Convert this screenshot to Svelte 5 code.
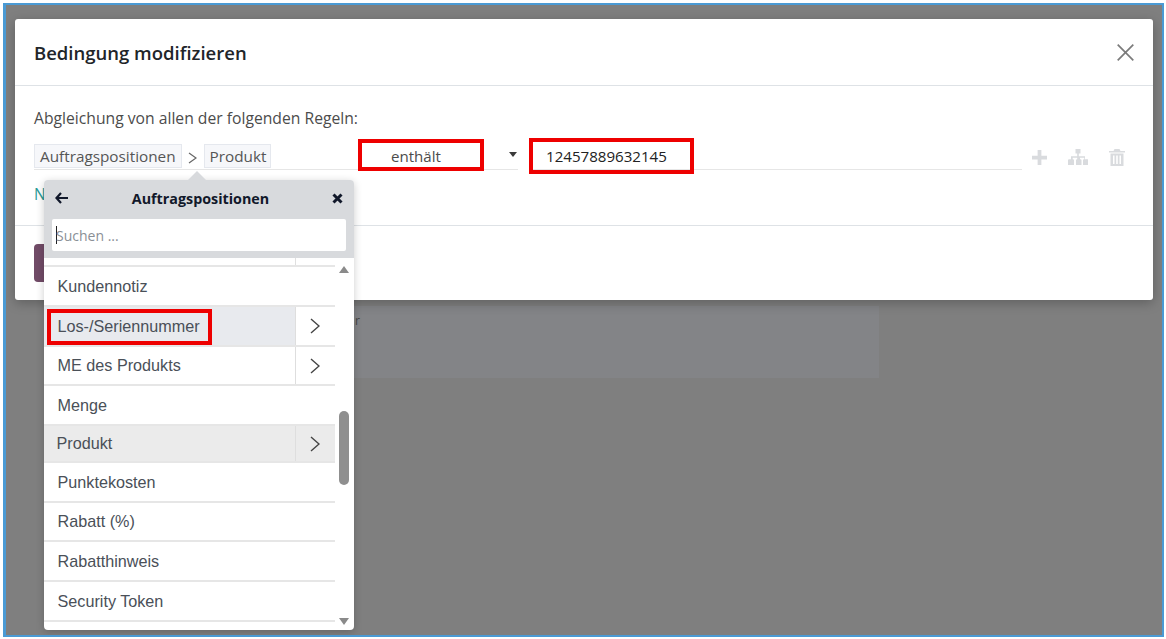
<script>
  const rows = [
    { label: 'Kundennotiz', h: 40 },
    { label: 'Los-/Seriennummer', h: 40, sub: true, tone: 'lot' },
    { label: 'ME des Produkts', h: 39, sub: true },
    { label: 'Menge', h: 40 },
    { label: 'Produkt', h: 37, sub: true, tone: 'active' },
    { label: 'Punktekosten', h: 40 },
    { label: 'Rabatt (%)', h: 39 },
    { label: 'Rabatthinweis', h: 40 },
    { label: 'Security Token', h: 40 }
  ];
</script>

<div class="frame">
  <div class="backdrop">
    <div class="ghost">r</div>
    <section class="modal">
      <header class="head">
        <h1>Bedingung modifizieren</h1>
        <svg class="close" width="17" height="17" viewBox="0 0 17 17"><path d="M.7.7 16.300 16.300M16.300.7.7 16.300" stroke="#7b7b7b" stroke-width="1.700" fill="none"/></svg>
      </header>
      <div class="body">
        <p class="rule">Abgleichung von allen der folgenden Regeln:</p>
        <div class="cond">
          <div class="path">
            <span class="chip">Auftragspositionen</span>
            <svg width="9" height="12" viewBox="0 0 9 12"><path d="M1 1 8 6 1 11" stroke="#666" stroke-width="1.200" fill="none"/></svg>
            <span class="chip second">Produkt</span>
          </div>
          <div class="op">
            <span class="optext">enthält</span>
            <span class="caret"></span>
          </div>
          <div class="val"><span class="valtext">12457889632145</span></div>
          <div class="tools">
            <svg width="15" height="15" viewBox="0 0 16 16"><path d="M6 0h4v6h6v4h-6v6H6v-6H0V6h6z" fill="#d9dbde"/></svg>
            <svg width="20" height="16" viewBox="0 0 20 16"><path d="M7.500 0h5v4.500h-1.700v2.700H17v3h1.500a1 1 0 0 1 1.500 1V16h-5v-4.800a1 1 0 0 1 1-1h.3V8.700h-4.300v1.500h.5a1 1 0 0 1 1 1V16H8v-4.800a1 1 0 0 1 1-1h.2V8.700H4.700v1.500H5a1 1 0 0 1 1 1V16H0v-4.800a1 1 0 0 1 1-1h2V7.200h6.200V4.500H7.500z" fill="#d9dbde"/></svg>
            <svg width="16" height="17" viewBox="0 0 16 17"><path d="M5.500 0h5l1 2H16v1.500H0V2h4.500zM1.500 4.500h13V17h-13zM4 6.500V15h1.500V6.500zM7.200 6.500V15h1.600V6.500zM10.500 6.500V15H12V6.500z" fill="#d9dbde" fill-rule="evenodd"/></svg>
          </div>
        </div>
        <div class="newrule">Neue Regel</div>
      </div>
      <footer class="foot"><span class="btn"></span></footer>
    </section>

    <div class="pop">
      <span class="tip"></span>
      <div class="pophead">
        <div class="poptitle">
          <svg width="14" height="12" viewBox="0 0 14 12"><path d="M6 1 1.500 6 6 11M2 6h11" stroke="#11182a" stroke-width="2.200" fill="none"/></svg>
          <strong>Auftragspositionen</strong>
          <svg width="11" height="11" viewBox="0 0 11 11"><path d="M1.500 1.500 9.500 9.500M9.500 1.500 1.500 9.500" stroke="#11182a" stroke-width="3" fill="none"/></svg>
        </div>
        <div class="search"><span class="cursor"></span><span>Suchen ...</span></div>
      </div>
      <div class="listwrap">
        <div class="stub"></div>
        <ul>
          {#each rows as r}
            <li class={r.tone ?? ''} style="height:{r.h}px">
              <span class="label">{r.label}</span>
              {#if r.sub}
                <span class="sub"><svg width="10" height="16" viewBox="0 0 10 16"><path d="M1 1 9 8 1 15" stroke="#444" stroke-width="1.400" fill="none"/></svg></span>
              {/if}
            </li>
          {/each}
        </ul>
        <div class="scroll">
          <span class="up"></span>
          <span class="thumb"></span>
          <span class="down"></span>
        </div>
      </div>
    </div>

    <span class="mark m-op"></span>
    <span class="mark m-val"></span>
    <span class="mark m-lot"></span>
  </div>
</div>

<style>
  :global(body) { margin: 0; background: #fff; }
  .frame {
    width: 1166px;
    height: 639px;
    box-sizing: border-box;
    padding: 3px 2px 2px 3px;
    font-family: "Open Sans", "Liberation Sans", sans-serif;
  }
  .backdrop {
    position: relative;
    height: 100%;
    box-sizing: border-box;
    padding: 14px 9px 0 9px;
    background: #7f7f7f;
    border: 2px solid #4a9ad4;
    border-left-width: 3px;
    overflow: hidden;
  }
  .ghost {
    position: absolute;
    left: 344px;
    top: 301px;
    width: 529px;
    height: 72px;
    padding: 7px 0 0 5px;
    box-sizing: border-box;
    background: #838487;
    color: #444;
    font-size: 12px;
    line-height: 16px;
  }
  .modal {
    position: relative;
    background: #fff;
    border-radius: 3px;
    height: 281px;
    display: flex;
    flex-direction: column;
    box-shadow: 0 3px 12px rgba(0,0,0,.25);
  }
  .head {
    height: 67px;
    box-sizing: border-box;
    border-bottom: 1px solid #dee2e6;
    display: flex;
    align-items: center;
    justify-content: space-between;
    padding: 0 19px;
  }
  h1 { margin: 0; font-size: 18.500px; font-weight: 600; color: #212529; }
  .body { height: 140px; box-sizing: border-box; border-bottom: 1px solid #dee2e6; padding: 22px 19px 0; font-size: 15.300px; color: #4c4c4c; }
  .rule { margin: 0; line-height: 20px; font-size: 15.700px; }
  .cond { display: flex; height: 26px; margin-top: 16px; align-items: flex-start; }
  .path { width: 324px; height: 25px; flex: none; display: flex; align-items: flex-start; gap: 6px; border-bottom: 1px solid #e6e6e6; color: #555; }
  .path svg { margin-top: 8px; }
  .chip { background: #f6f7fa; border: 1px solid #e5e8ee; padding: 0 5px; line-height: 22px; height: 22px; font-size: 15.300px; }
  .second { margin-left: 1px; padding-right: 4px; }
  .op { width: 160px; height: 25px; flex: none; border-bottom: 1px solid #e6e6e6; position: relative; }
  .optext { position: absolute; left: 33px; top: 1px; line-height: 22px; font-size: 15.100px; }
  .caret { position: absolute; right: 1px; top: 8px; border: 4px solid transparent; border-top: 5px solid #3a3a3a; border-bottom: 0; }
  .val { margin-left: 12px; width: 492px; height: 25px; flex: none; border-bottom: 1px solid #e6e6e6; position: relative; }
  .valtext { position: absolute; left: 16px; top: 1px; line-height: 22px; font-size: 15.100px; color: #222; }
  .tools { margin-left: 10px; display: flex; align-items: center; gap: 21px; height: 26px; }
  .newrule { margin-top: 15px; font-size: 15.400px; color: #2a9a96; line-height: 20px; }
  .foot { padding: 18px 19px 0; }
  .btn { display: block; width: 60px; height: 38px; background: #714b67; border-radius: 4px; }

  .pop {
    position: absolute;
    left: 38px;
    top: 175px;
    width: 310px;
    height: 450px;
    background: #fff;
    border-radius: 4px;
    box-shadow: 0 2px 8px rgba(0,0,0,.2);
    display: flex;
    flex-direction: column;
  }
  .tip { position: absolute; left: 144px; top: -9px; border: 9px solid transparent; border-top: 0; border-bottom: 9px solid #d8dadd; }
  .pophead { background: #d8dadd; height: 78px; box-sizing: border-box; border-radius: 4px 4px 0 0; padding: 0 8px; }
  .poptitle { display: flex; align-items: center; justify-content: space-between; height: 36px; margin-bottom: 3px; padding: 0 3px; color: #11182a; }
  .poptitle strong { font-size: 14.300px; font-weight: 700; }
  .search { height: 32px; background: #fff; border-radius: 2px; display: flex; align-items: center; padding-left: 4px; color: #8a8f96; font-size: 14px; }
  .cursor { width: 1px; height: 18px; background: #222; margin-right: -1px; }
  .listwrap { position: relative; flex: 1; overflow: hidden; }
  .stub { height: 7px; width: 251px; border-right: 1px solid #e0e0e0; }
  ul { list-style: none; margin: 0; padding: 0; width: 291px; border-top: 2px solid #e6e6e6; }
  li { position: relative; display: flex; align-items: center; box-sizing: border-box; border-bottom: 2px solid #e6e6e6; font-family: "Liberation Sans", sans-serif; font-size: 16.200px; color: #4a5058; }
  .label { padding-left: 13.500px; flex: 1; }
  .sub { width: 40px; height: 100%; border-left: 1px solid #dedede; display: flex; align-items: center; padding-left: 14px; box-sizing: border-box; }
  .lot .label { background: #e8eaee; align-self: stretch; display: flex; align-items: center; }
  .active { background: #ebebeb; }
  .active .label { padding-left: 12.500px; }
  .scroll { position: absolute; right: 0; top: 0; bottom: 0; width: 19px; }
  .up { position: absolute; left: 4px; top: 8px; border: 5px solid transparent; border-top: 0; border-bottom: 7px solid #8a8a8a; }
  .down { position: absolute; left: 4px; bottom: 5px; border: 5px solid transparent; border-bottom: 0; border-top: 7px solid #8a8a8a; }
  .thumb { position: absolute; left: 4px; top: 153px; width: 10px; height: 74px; background: #8f8f8f; border-radius: 5px; }

  .mark { position: absolute; border: 4px solid #ee0000; box-sizing: border-box; }
  .m-op { left: 352px; top: 134px; width: 126px; height: 32px; }
  .m-val { left: 523px; top: 133px; width: 165px; height: 36px; }
  .m-lot { left: 41px; top: 304px; width: 165px; height: 36px; }
</style>
